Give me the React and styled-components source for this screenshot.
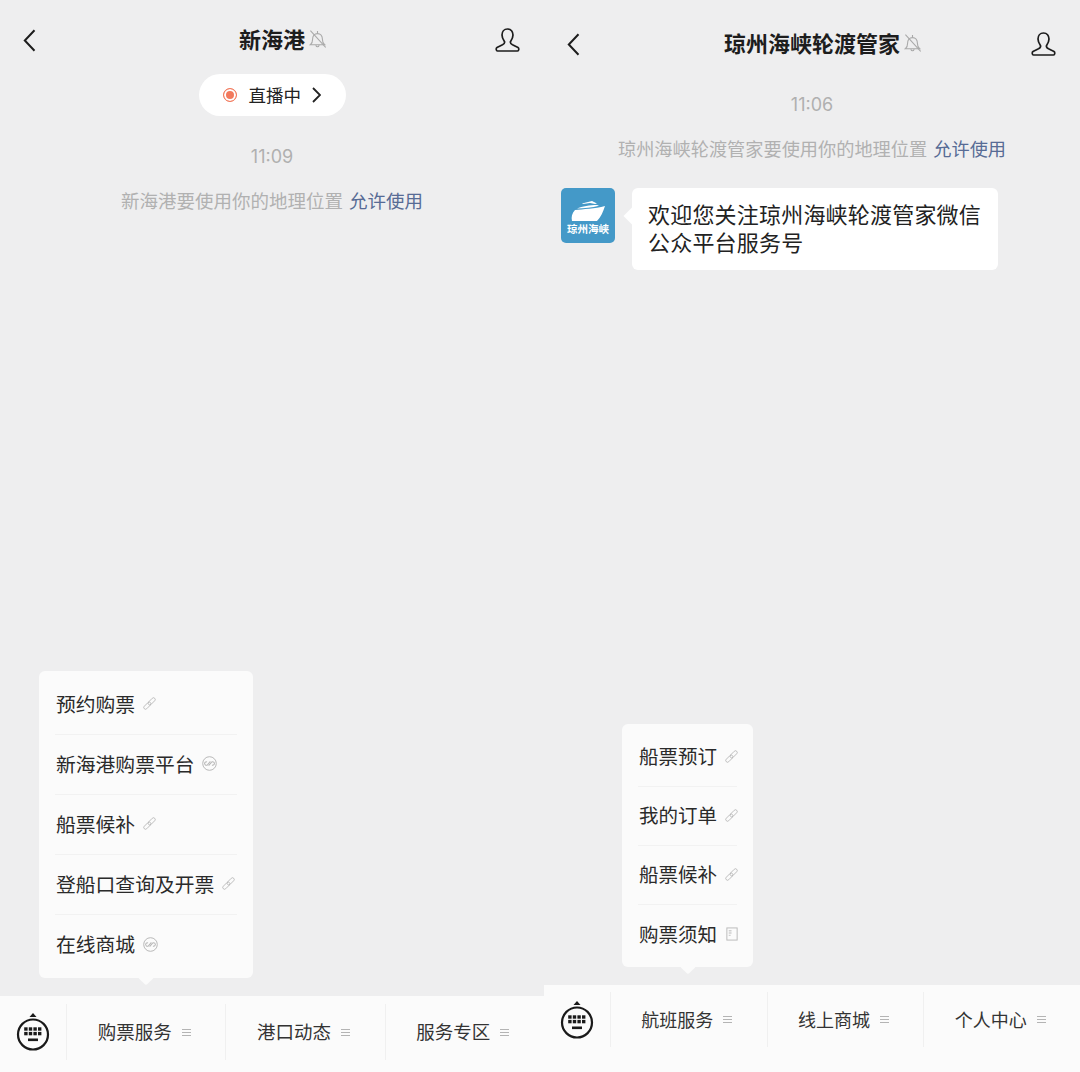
import React from 'react'
import styled, { createGlobalStyle } from 'styled-components'

const GlobalStyle = createGlobalStyle`
  html, body { margin: 0; padding: 0; background: #eeeeef; }
  body { font-family: "Noto Sans CJK SC", "Noto Sans", sans-serif; }
`

const Page = styled.div`
  display: flex;
  width: 1080px;
  height: 1072px;
  overflow: hidden;
`

const Panel = styled.section`
  display: flex;
  flex-direction: column;
  width: ${p => p.$width}px;
  height: 100%;
  background: #eeeeef;
`

const Header = styled.header`
  display: grid;
  grid-template-columns: 1fr auto 1fr;
  align-items: center;
  height: 68px;
  margin-top: ${p => p.$top}px;
  padding: 0 ${p => p.$right}px 0 ${p => p.$left}px;
  flex-shrink: 0;
`

const BackIcon = styled.svg`
  width: 13px;
  height: 23px;
  fill: none;
  stroke: #1c1c1c;
  stroke-width: 2;
`

const TitleWrap = styled.div`
  display: flex;
  align-items: center;
  gap: 4px;
  padding-left: 22px;
`

const Title = styled.h1`
  margin: 0;
  padding-bottom: 4px;
  font-size: 22px;
  line-height: 30px;
  font-weight: 700;
  color: #1d1d1d;
`

const BellIcon = styled.svg`
  width: 17px;
  height: 18px;
  margin-bottom: 2px;
  fill: none;
  stroke: #a9a9a9;
  stroke-width: 1;
`

const PersonIcon = styled.svg`
  justify-self: end;
  width: 25px;
  height: 24px;
  fill: none;
  stroke: #1c1c1c;
  stroke-width: 1.7;
`

const Main = styled.main`
  flex: 1;
  display: flex;
  flex-direction: column;
  align-items: center;
  min-height: 0;
`

const LivePill = styled.div`
  display: flex;
  align-items: center;
  width: 147px;
  height: 42px;
  box-sizing: border-box;
  padding: 0 0 2px 24px;
  border-radius: 21px;
  background: #fff;
  color: #222;
  font-size: 17.5px;
`

const LiveDot = styled.span`
  width: 14px;
  height: 14px;
  box-sizing: border-box;
  margin: 2px 12px 0 0;
  border: 1.5px solid #f2795c;
  border-radius: 50%;
  background: #f2795c;
  box-shadow: inset 0 0 0 2px #fff;
`

const LiveArrow = styled.svg`
  width: 9px;
  height: 16px;
  margin: 2px 0 0 11px;
  fill: none;
  stroke: #222;
  stroke-width: 1.8;
`

const Time = styled.div`
  margin-top: ${p => p.$top}px;
  font-family: "Inter", "Liberation Sans", sans-serif;
  font-size: 18px;
  line-height: 24px;
  color: #b0b0b0;
`

const Notice = styled.div`
  margin-top: 19px;
  font-size: ${p => p.$size}px;
  line-height: 24px;
  color: #b1b1b1;
  white-space: nowrap;
`

const AllowLink = styled.span`
  margin-left: 2px;
  color: #576b95;
`

const MessageRow = styled.div`
  align-self: stretch;
  display: flex;
  align-items: flex-start;
  gap: 17px;
  margin-top: 28px;
  padding-left: 17px;
`

const Avatar = styled.div`
  display: flex;
  flex-direction: column;
  align-items: center;
  width: 54px;
  height: 55px;
  box-sizing: border-box;
  padding-top: 11px;
  border-radius: 5px;
  background: #4499c8;
  color: #fff;
  font-size: 10.5px;
  line-height: 13px;
  font-weight: 700;
`

const ShipIcon = styled.svg`
  width: 36px;
  height: 23px;
  fill: #fff;
`

const Bubble = styled.div`
  position: relative;
  width: 366px;
  box-sizing: border-box;
  padding: 11px 16px 15px;
  border-radius: 6px;
  background: #fff;
  color: #222;
  font-size: 22px;
  line-height: 28px;
  letter-spacing: 0.2px;

  &::before {
    content: "";
    position: absolute;
    left: -6px;
    top: 22px;
    width: 12px;
    height: 12px;
    background: #fff;
    transform: rotate(45deg);
  }
`

const Bar = styled.footer`
  position: relative;
  display: flex;
  align-items: flex-start;
  flex-shrink: 0;
  height: ${p => p.$height}px;
  box-sizing: border-box;
  padding-top: ${p => p.$pad}px;
  background: #fbfbfb;
`

const KeyboardCell = styled.div`
  display: flex;
  align-items: center;
  justify-content: center;
  width: 66px;
  height: ${p => p.$height}px;
  flex-shrink: 0;
`

const KeyboardIcon = styled.svg`
  width: 34px;
  height: 38px;
  fill: #1a1a1a;
`

const Tab = styled.div`
  flex: 1;
  display: flex;
  align-items: center;
  justify-content: center;
  gap: 10px;
  height: ${p => p.$height}px;
  box-sizing: border-box;
  padding: 0 4px 2px 0;
  border-left: 1px solid #f0f0f0;
  color: #333;
  font-size: ${p => p.$size}px;
`

const TabLines = styled.span`
  display: flex;
  flex-direction: column;
  gap: 2px;
  width: 9px;
  margin-top: 2px;

  i {
    display: block;
    height: 1px;
    background: #b4b4b4;
  }
`

const Popup = styled.div`
  position: absolute;
  left: ${p => p.$left}px;
  bottom: calc(100% + 18px);
  width: ${p => p.$width}px;
  box-sizing: border-box;
  padding: 4px 16px 3px;
  border-radius: 6px;
  background: #fbfbfb;

  &::after {
    content: "";
    position: absolute;
    left: ${p => p.$arrow - 6}px;
    bottom: -5px;
    width: 12px;
    height: 12px;
    border-radius: 2px;
    background: #fbfbfb;
    transform: rotate(45deg);
  }
`

const PopupRow = styled.div`
  display: flex;
  align-items: center;
  gap: 8px;
  height: ${p => p.$height}px;
  box-sizing: border-box;
  padding: 0 0 3px 1px;
  color: #2a2a2a;
  font-size: ${p => p.$size}px;
  white-space: nowrap;
  border-bottom: 1px solid #f2f2f2;

  &:last-child {
    border-bottom: none;
  }
`

const RowIcon = styled.svg`
  width: ${p => p.$size}px;
  height: ${p => p.$size}px;
  margin-top: 1px;
  flex-shrink: 0;
  fill: none;
  stroke: #b8b8b8;
  stroke-width: 1;
`

const Back = () => (
  <BackIcon viewBox="0 0 13 23">
    <path d="M11.5 1.2 1.8 11.5l9.7 10.3" />
  </BackIcon>
)

const Bell = () => (
  <BellIcon viewBox="1.5 1 15 16.500">
    <path d="M2.500 14.500c1.600-1.200 2-2.600 2-5 0-3 1.800-5.200 4.500-5.200s4.500 2.200 4.500 5.200c0 2.400.4 3.800 2 5H2.500Z" />
    <path d="M7.500 14.800c.2 1 .8 1.600 1.500 1.600s1.300-.6 1.500-1.600M9 2v2.200M2.500 1.500l14 15.500" />
  </BellIcon>
)

const Person = () => (
  <PersonIcon viewBox="0 0 25 24">
    <path d="M12.500 1C9 1 7 3.500 7 7c0 3 1.500 5 2.500 6.500.5 1.500-.5 2.500-2 3.300L2 19.500C.8 20.200 1 23 2.500 23h20c1.500 0 1.700-2.800.5-3.500l-5.500-2.700c-1.500-.8-2.500-1.800-2-3.300C16.500 12 18 10 18 7c0-3.500-2-6-5.500-6Z" />
  </PersonIcon>
)

const KeyboardGlyph = () => (
  <KeyboardIcon viewBox="0 0 34 38">
    <path d="M17 0l3.500 4h-7z" />
    <circle cx="17" cy="21.500" r="15" fill="none" stroke="#1a1a1a" strokeWidth="2.200" />
    {[0, 1, 2, 3].map(i => (
      <React.Fragment key={i}>
        <rect x={8.2 + i * 4.600} y="14.300" width="3.400" height="3.400" />
        <rect x={8.2 + i * 4.600} y="18.900" width="3.400" height="3.400" />
      </React.Fragment>
    ))}
    <rect x="12" y="25.500" width="10" height="2.600" />
  </KeyboardIcon>
)

const LinkGlyph = () => (
  <RowIcon $size={13} viewBox="0 0 15 15">
    <g transform="rotate(-45 7.500 7.500)">
      <rect x="-1" y="5.500" width="10" height="4" rx="2" />
      <rect x="6" y="5.500" width="10" height="4" rx="2" />
    </g>
  </RowIcon>
)

const MiniGlyph = () => (
  <RowIcon $size={15} viewBox="0 0 15 15">
    <circle cx="7.500" cy="7.500" r="6.800" />
    <g transform="rotate(40 7.500 7.500)">
      <path d="M6.800 5.300v4.200c0 1-.8 1.700-1.700 1.700S3.400 10.500 3.400 9.500c0-.8.5-1.400 1.200-1.600" />
      <path d="M8.200 9.700V5.500c0-1 .8-1.700 1.700-1.700s1.700.7 1.700 1.700c0 .8-.5 1.400-1.200 1.600" />
    </g>
  </RowIcon>
)

const DocGlyph = () => (
  <RowIcon $size={14} viewBox="0 0 15 15">
    <rect x="2" y="1" width="11" height="13" />
    <path d="M4 4h3M4 6.500h3M4 9h2" stroke="#cfcfcf" strokeWidth="1.500" />
  </RowIcon>
)

const rowIcons = { link: LinkGlyph, mini: MiniGlyph, doc: DocGlyph }

const TabBar = ({ height, pad, rowHeight, size, tabs, popup }) => (
  <Bar $height={height} $pad={pad}>
    <KeyboardCell $height={rowHeight}>
      <KeyboardGlyph />
    </KeyboardCell>
    {tabs.map(t => (
      <Tab key={t} $height={rowHeight} $size={size}>
        {t}
        <TabLines><i /><i /><i /></TabLines>
      </Tab>
    ))}
    <Popup $left={popup.left} $width={popup.width} $arrow={popup.arrow}>
      {popup.rows.map(([label, icon]) => {
        const Icon = rowIcons[icon]
        return (
          <PopupRow key={label} $height={popup.rowHeight} $size={popup.size}>
            {label}
            <Icon />
          </PopupRow>
        )
      })}
    </Popup>
  </Bar>
)

const App = () => (
  <Page>
    <GlobalStyle />
    <Panel $width={544}>
      <Header $top={6} $left={23} $right={24}>
        <Back />
        <TitleWrap>
          <Title>新海港</Title>
          <Bell />
        </TitleWrap>
        <Person />
      </Header>
      <Main>
        <LivePill>
          <LiveDot />
          直播中
          <LiveArrow viewBox="0 0 9 16"><path d="M1 1l7 7-7 7" /></LiveArrow>
        </LivePill>
        <Time $top={29}>11:09</Time>
        <Notice $size={18.5}>新海港要使用你的地理位置 <AllowLink>允许使用</AllowLink></Notice>
      </Main>
      <TabBar
        height={76}
        pad={8}
        rowHeight={56}
        size={18.5}
        tabs={['购票服务', '港口动态', '服务专区']}
        popup={{
          left: 39,
          width: 214,
          arrow: 107,
          rowHeight: 60,
          size: 19.8,
          rows: [
            ['预约购票', 'link'],
            ['新海港购票平台', 'mini'],
            ['船票候补', 'link'],
            ['登船口查询及开票', 'link'],
            ['在线商城', 'mini']
          ]
        }}
      />
    </Panel>
    <Panel $width={536}>
      <Header $top={10} $left={23} $right={24}>
        <Back />
        <TitleWrap>
          <Title>琼州海峡轮渡管家</Title>
          <Bell />
        </TitleWrap>
        <Person />
      </Header>
      <Main>
        <Time $top={15}>11:06</Time>
        <Notice $size={18.2}>琼州海峡轮渡管家要使用你的地理位置 <AllowLink>允许使用</AllowLink></Notice>
        <MessageRow>
          <Avatar>
            <ShipIcon viewBox="0 0 36 23">
              <path d="M2 22c-1-4 0-8 3-11 8-1 20-1 30-4-2 6-4 11-8 15H2Z" />
              <path d="M7 9.500c5-2 13-3.500 20-3.500l2 .8C22 8.500 14 9.500 7 9.500Z" />
              <path d="M12 4.500 22 2l5 2.500-2 .5-5-1-7 1z" />
            </ShipIcon>
            琼州海峡
          </Avatar>
          <Bubble>欢迎您关注琼州海峡轮渡管家微信公众平台服务号</Bubble>
        </MessageRow>
      </Main>
      <TabBar
        height={87}
        pad={7}
        rowHeight={55}
        size={18}
        tabs={['航班服务', '线上商城', '个人中心']}
        popup={{
          left: 78,
          width: 131,
          arrow: 66,
          rowHeight: 59,
          size: 19.5,
          rows: [
            ['船票预订', 'link'],
            ['我的订单', 'link'],
            ['船票候补', 'link'],
            ['购票须知', 'doc']
          ]
        }}
      />
    </Panel>
  </Page>
)

export default App
